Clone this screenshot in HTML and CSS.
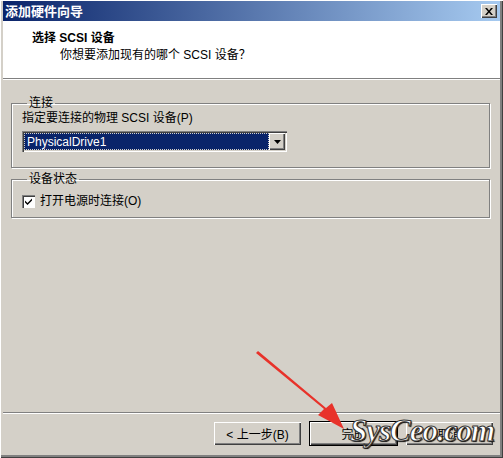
FILE: index.html
```html
<!DOCTYPE html>
<html lang="zh-CN">
<head>
    <meta charset="UTF-8">
    <title>添加硬件向导</title>
    <link rel="stylesheet" href="styles.css">
</head>
<body>
    <div class="window">
        <div class="titlebar">
            <span class="title">添加硬件向导</span>
            <span class="close">
                <svg width="8" height="7" viewBox="0 0 8 7"><path d="M0 0h2l2 2.5L6 0h2L5 3.5 8 7H6L4 4.5 2 7H0l3-3.5z" fill="#000"/></svg>
            </span>
        </div>

        <div class="header">
            <div class="heading">选择 SCSI 设备</div>
            <div class="subheading">你想要添加现有的哪个 SCSI 设备？</div>
        </div>

        <div class="content">
            <fieldset class="group first">
                <legend>连接</legend>
                <div class="label">指定要连接的物理 SCSI 设备(P)</div>
                <div class="combo">
                    <span class="combo-value">PhysicalDrive1</span>
                    <span class="combo-btn">
                        <svg width="7" height="4" viewBox="0 0 7 4"><path d="M0 0h7L3.5 4z" fill="#000"/></svg>
                    </span>
                </div>
            </fieldset>

            <fieldset class="group second">
                <legend>设备状态</legend>
                <label class="check-row">
                    <span class="checkbox">
                        <svg width="7" height="7" viewBox="0 0 7 7"><path d="M0 2.5l2.5 2.5L7 0.5v2L2.5 7 0 4.5z" fill="#000"/></svg>
                    </span>
                    打开电源时连接(O)
                </label>
            </fieldset>
        </div>

        <div class="footer">
            <button class="btn">&lt; 上一步(B)</button>
            <button class="btn">完成</button>
            <button class="btn">取消</button>
        </div>

        <!-- annotation added on top of the screenshot -->
        <svg class="arrow" width="110" height="90" viewBox="0 0 110 90">
            <path d="M2 2 L70 58 L64 64 L90 78 L78 52 L72 57 L4 0 Z" fill="#e8322a"/>
        </svg>
        <div class="watermark">SysCeo.com</div>
    </div>
</body>
</html>
```

FILE: styles.css
```css
* { box-sizing: border-box; }
body {
    margin: 0;
    font-family: "Liberation Sans", "Noto Sans CJK SC", sans-serif;
    font-size: 12px;
    color: #000;
    background: #d4d0c8;
}
.window {
    position: relative;
    width: 503px;
    height: 458px;
    display: flex;
    flex-direction: column;
    padding: 1px 3px 3px 3px;
    background: #d4d0c8;
    box-shadow: inset 1px 1px #ffffff, inset -1px -1px #404040, inset -3px -3px #808080;
}
.titlebar {
    height: 20px;
    display: flex;
    align-items: center;
    justify-content: space-between;
    padding: 0 3px 0 2px;
    background: linear-gradient(90deg, #0a246a 0%, #a6caf0 100%);
}
.title {
    color: #fff;
    font-weight: bold;
    font-size: 13px;
    font-family: "Noto Sans CJK SC", sans-serif;
    line-height: 16px;
}
.close {
    width: 16px;
    height: 14px;
    display: flex;
    align-items: center;
    justify-content: center;
    background: #d4d0c8;
    box-shadow: inset 1px 1px #fff, inset -1px -1px #404040, inset -2px -2px #808080;
}
.header {
    height: 58px;
    background: #fff;
    padding: 9px 0 0 29px;
    border-bottom: 1px solid #808080;
    box-shadow: 0 1px #fff;
}
.heading {
    font-weight: bold;
    line-height: 16px;
}
.subheading {
    padding-left: 28px;
    margin-top: 1px;
    line-height: 16px;
}
.content {
    flex: 1;
    padding: 17px 10px 0 8px;
}
.group {
    margin: 0;
    padding: 0 10px 15px 10px;
    border: 1px solid #808080;
    box-shadow: inset 1px 1px #fff, 1px 1px #fff;
}
.group legend {
    padding: 0 2px;
    margin-left: 5px;
    line-height: 14px;
}
.group.second {
    margin-top: 4px;
    padding-top: 8px;
    padding-bottom: 9px;
}
.label { line-height: 14px; margin-top: 1px; }
.combo {
    margin-top: 6px;
    width: 265px;
    height: 21px;
    display: flex;
    background: #fff;
    padding: 2px;
    box-shadow: inset 1px 1px #808080, inset 2px 2px #404040, inset -1px -1px #fff, inset -2px -2px #d4d0c8;
}
.combo-value {
    flex: 1;
    background: #0a246a;
    color: #fff;
    padding-left: 2px;
    line-height: 17px;
    border: 1px dotted #d4d0c8;
}
.combo-btn {
    width: 16px;
    display: flex;
    align-items: center;
    justify-content: center;
    background: #d4d0c8;
    box-shadow: inset 1px 1px #fff, inset -1px -1px #404040, inset -2px -2px #808080;
}
.check-row {
    display: flex;
    align-items: center;
    gap: 5px;
    line-height: 14px;
}
.checkbox {
    width: 13px;
    height: 13px;
    display: flex;
    align-items: center;
    justify-content: center;
    background: #fff;
    box-shadow: inset 1px 1px #808080, inset 2px 2px #404040, inset -1px -1px #fff;
}
.footer {
    height: 43px;
    display: flex;
    justify-content: flex-end;
    gap: 9px;
    padding: 9px 7px 0 0;
    border-top: 1px solid #808080;
    box-shadow: inset 0 1px #fff;
}
.btn {
    width: 87px;
    height: 23px;
    padding: 0;
    font: inherit;
    background: #d4d0c8;
    border: none;
    box-shadow: inset 1px 1px #fff, inset -1px -1px #404040, inset -2px -2px #808080;
}
.btn:nth-child(2) {
    box-shadow: 0 0 0 1px #000, inset 1px 1px #fff, inset -1px -1px #404040, inset -2px -2px #808080;
}
.arrow {
    position: absolute;
    left: 254px;
    top: 351px;
}
.watermark {
    position: absolute;
    left: 350px;
    top: 413px;
    font-family: "Liberation Serif", serif;
    font-style: italic;
    font-weight: bold;
    font-size: 31px;
    letter-spacing: -1px;
    color: #fff;
    -webkit-text-stroke: 1px #333;
    text-shadow: 1px 1px 1px #000;
}
```
